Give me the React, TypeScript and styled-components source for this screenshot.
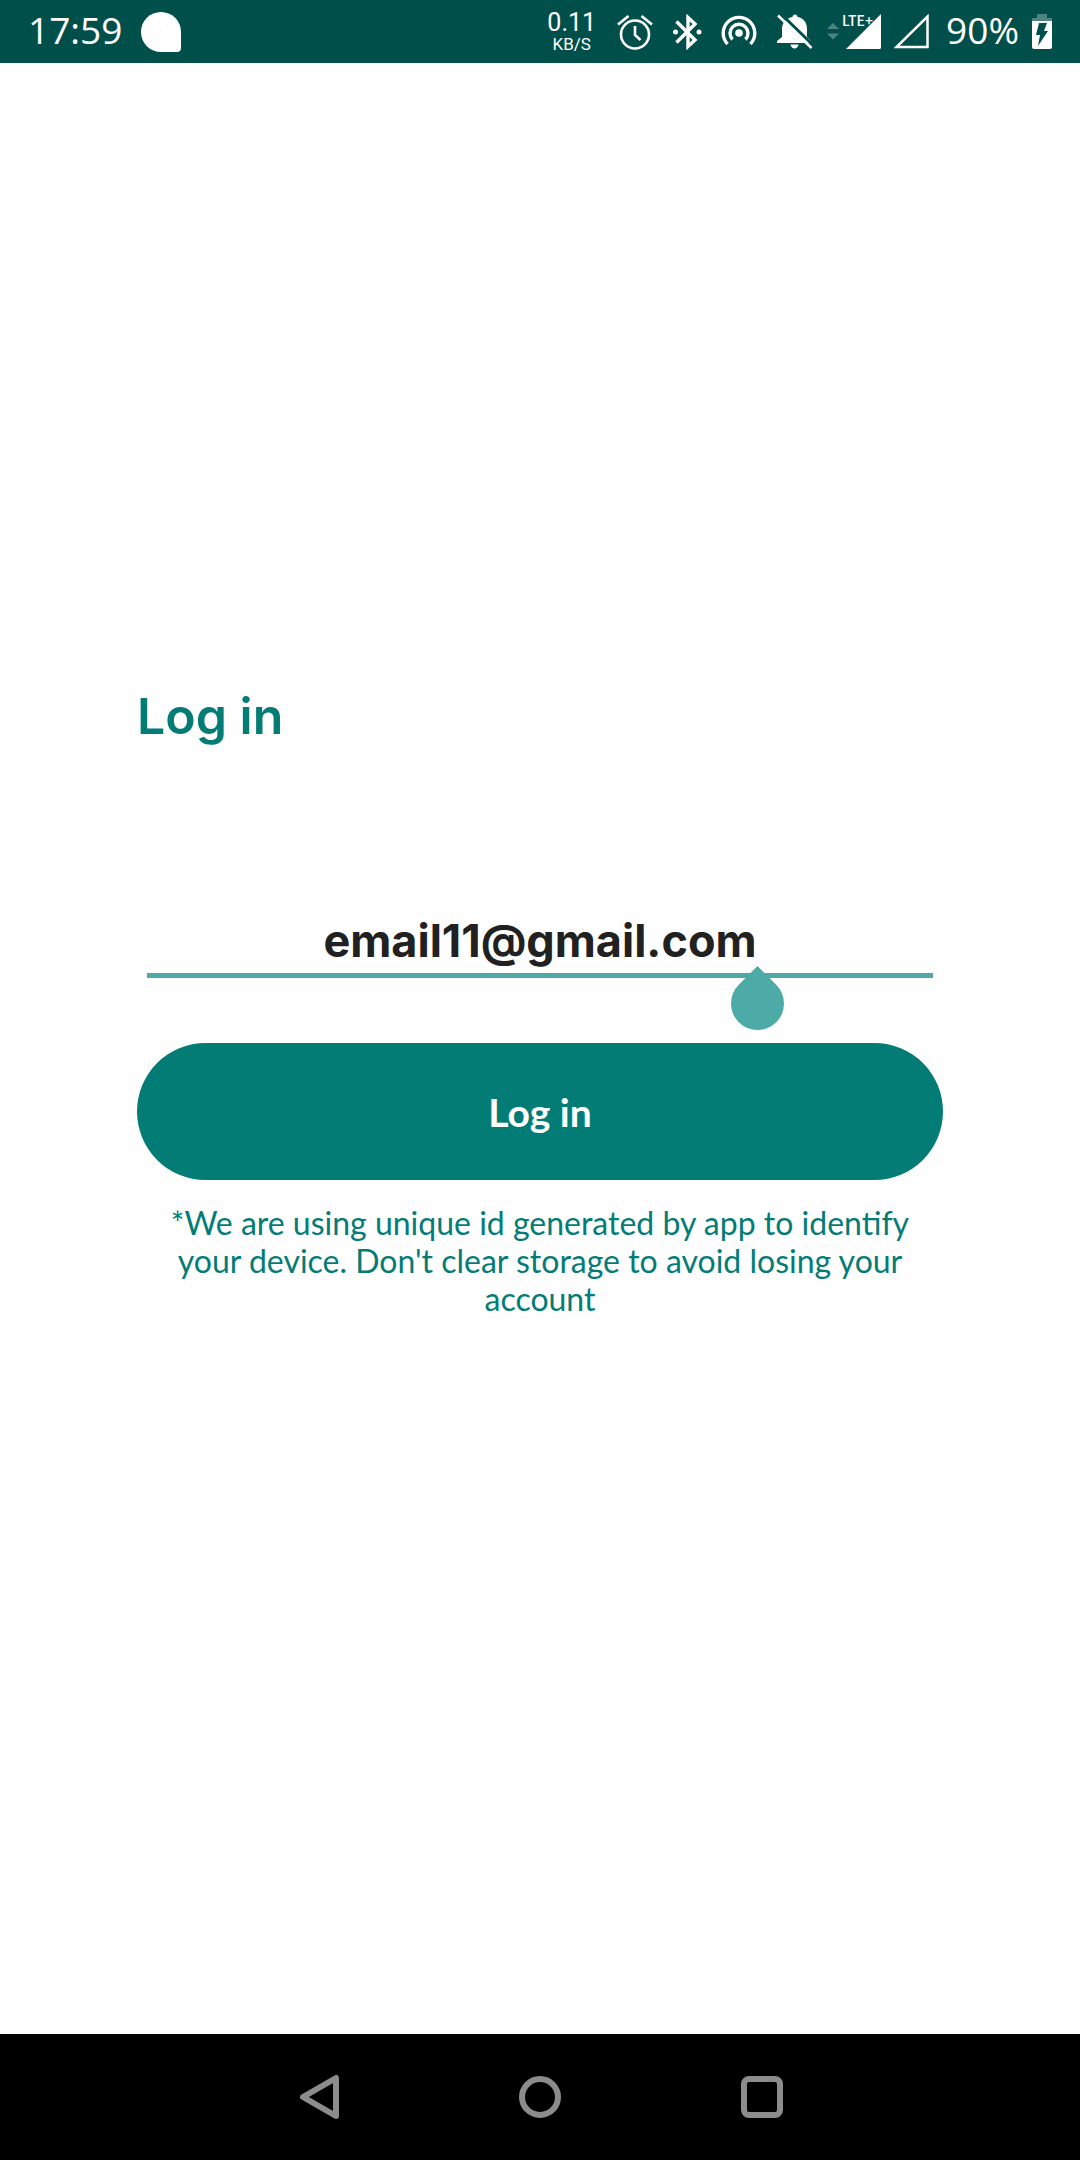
import React, { useState } from 'react';
import styled, { createGlobalStyle } from 'styled-components';

const GlobalStyle = createGlobalStyle`
  *, *::before, *::after { box-sizing: border-box; }
  body { margin: 0; background: #fefefe; font-family: "Open Sans", "Noto Sans", sans-serif; }
`;

const Screen = styled.div`
  display: flex;
  flex-direction: column;
  min-height: 100vh;
`;

const StatusBar = styled.header`
  display: flex;
  justify-content: space-between;
  align-items: center;
  height: 63px;
  padding: 0 28px;
  background: #004f4b;
  color: #fff;
`;

const StatusGroup = styled.div<{ $gap: number }>`
  display: flex;
  align-items: center;
  gap: ${(p) => p.$gap}px;
`;

const StatusText = styled.span`
  padding-bottom: 4px;
  font: 400 37px/50px "Open Sans", "Noto Sans", sans-serif;
`;

const Speed = styled.div`
  display: flex;
  flex-direction: column;
  align-items: center;
  padding-right: 2px;
  font-family: Roboto, sans-serif;
`;

const SpeedValue = styled.span`
  font-size: 25px;
  line-height: 24px;
`;

const SpeedUnit = styled.span`
  font-size: 17px;
  line-height: 18px;
`;

const Glyph = styled.svg`
  display: block;
  flex: none;
`;

const Signal = styled.div`
  position: relative;
`;

const NetworkType = styled.span`
  position: absolute;
  top: 0;
  left: 15px;
  font: 500 14px/12px "Noto Sans CJK SC", "Open Sans", sans-serif;
`;

const Main = styled.main`
  display: flex;
  flex: 1;
  flex-direction: column;
  justify-content: center;
  padding: 0 137px 92px;
`;

const Form = styled.form`
  display: flex;
  flex-direction: column;
`;

const Title = styled.h1`
  margin: 0 0 167px;
  color: #047c76;
  font: 600 50px/58px Inter, sans-serif;
`;

const Field = styled.div`
  position: relative;
  display: flex;
  margin: 0 10px 65px;
`;

const EmailInput = styled.input`
  width: 100%;
  height: 66px;
  padding: 0 0 5px;
  border: 0;
  border-bottom: 5px solid #4fa9a4;
  border-radius: 0;
  outline: 0;
  background: transparent;
  color: #212121;
  font: 700 45px/56px Inter, sans-serif;
  text-align: center;
`;

const CaretHandle = styled.span`
  position: absolute;
  top: 65px;
  left: 584px;
  width: 53px;
  height: 53px;
  border-radius: 0 50% 50% 50%;
  background: #4daba7;
  transform: rotate(45deg);
`;

const LoginButton = styled.button`
  height: 137px;
  border: 0;
  border-radius: 69px;
  background: #047c76;
  color: #fff;
  font: 700 39px/48px Lato, sans-serif;
`;

const Note = styled.p`
  margin: 24px 0 0;
  padding: 0 24px;
  color: #047c76;
  font: 400 32px/38px Lato, sans-serif;
  text-align: center;
`;

const NavBar = styled.nav`
  display: flex;
  justify-content: center;
  gap: 96px;
  height: 126px;
  background: #000;
`;

const NavButton = styled.button`
  display: flex;
  align-items: center;
  justify-content: center;
  width: 126px;
  padding: 0;
  border: 0;
  background: none;
  color: #8c8c8c;
`;

const NotificationIcon = () => (
  <Glyph width="40" height="40" viewBox="0 0 40 40" fill="#fff">
    <path d="M20 0a20 20 0 0 1 20 20v16a4 4 0 0 1-4 4H20a20 20 0 0 1 0-40z" />
  </Glyph>
);

const AlarmIcon = () => (
  <Glyph width="36" height="36" viewBox="0 0 36 36" fill="none" stroke="#fff" strokeWidth="2.6">
    <circle cx="18" cy="20.5" r="14" />
    <path d="M18 12v9l5.5 5M1 10.5 11.5 2M35 10.5 24.5 2" />
  </Glyph>
);

const BluetoothIcon = () => (
  <Glyph width="30" height="36" viewBox="0 0 30 36" fill="none" stroke="#fff" strokeWidth="3.4">
    <path d="M4.5 7.5 23 26l-7 6.5V3.5L23 10 4.5 28.5" />
    <circle cx="3.5" cy="18" r="2.5" fill="#fff" stroke="none" />
    <circle cx="27" cy="18" r="2.5" fill="#fff" stroke="none" />
  </Glyph>
);

const HotspotIcon = () => (
  <Glyph width="36" height="36" viewBox="0 0 36 36" fill="none" stroke="#fff" strokeWidth="3.4">
    <circle cx="18" cy="19" r="3.8" fill="#fff" stroke="none" />
    <path d="M6.5 30A15.8 15.8 0 1 1 29.5 30" />
    <path d="M11.5 25.5A9 9 0 1 1 24.5 25.5" />
  </Glyph>
);

const MutedBellIcon = () => (
  <Glyph width="38" height="36" viewBox="0 0 38 36">
    <path fill="#fff" d="M19 0.5c1.5 0 2.5 1 2.5 2.5C28 4 31 9 31 15v8l4 4v2H1v-2l5-4v-8C6 9 10 4 16.5 3c0-1.5 1-2.5 2.5-2.5zM14.5 30.5h8c0 2-2 4-4 4s-4-2-4-4z" />
    <path stroke="#004f4b" strokeWidth="3" d="M5 0 38 32" />
    <path stroke="#fff" strokeWidth="2.5" d="M2 1.5 35.5 34" />
  </Glyph>
);

const MobileDataIcon = () => (
  <Glyph width="54" height="36" viewBox="0 0 54 36">
    <path fill="#4d8481" d="M0 15 6 9l6 6zM0 19.5h12l-6 6z" />
    <path fill="#fff" d="M54 0v33.5a1.5 1.5 0 0 1-1.5 1.5H19z" />
  </Glyph>
);

const EmptySignalIcon = () => (
  <Glyph width="36" height="36" viewBox="0 0 36 36" fill="none" stroke="#fff" strokeWidth="2.5">
    <path d="M33.5 2.5v30.5H2.5z" />
  </Glyph>
);

const BatteryIcon = () => (
  <Glyph width="20" height="36" viewBox="0 0 20 36">
    <path fill="#4d8481" d="M5 0h10v4h5v4H0V4h5z" />
    <path fill="#fff" d="M0 7h20v26a2 2 0 0 1-2 2H2a2 2 0 0 1-2-2z" />
    <path fill="#004f4b" d="M7 9h8l-3 8h4L6 32l2-11H4z" />
  </Glyph>
);

export default function App() {
  const [email, setEmail] = useState('email11@gmail.com');

  return (
    <Screen>
      <GlobalStyle />
      <StatusBar>
        <StatusGroup $gap={19}>
          <StatusText>17:59</StatusText>
          <NotificationIcon />
        </StatusGroup>
        <StatusGroup $gap={16}>
          <StatusGroup $gap={19}>
            <Speed>
              <SpeedValue>0.11</SpeedValue>
              <SpeedUnit>KB/S</SpeedUnit>
            </Speed>
            <AlarmIcon />
            <BluetoothIcon />
            <HotspotIcon />
            <StatusGroup $gap={13}>
              <MutedBellIcon />
              <Signal>
                <MobileDataIcon />
                <NetworkType>LTE+</NetworkType>
              </Signal>
              <EmptySignalIcon />
            </StatusGroup>
          </StatusGroup>
          <StatusGroup $gap={13}>
            <StatusText>90%</StatusText>
            <BatteryIcon />
          </StatusGroup>
        </StatusGroup>
      </StatusBar>

      <Main>
        <Form onSubmit={(event) => event.preventDefault()}>
          <Title>Log in</Title>
          <Field>
            <EmailInput
              type="email"
              aria-label="Email"
              value={email}
              onChange={(event) => setEmail(event.target.value)}
            />
            <CaretHandle />
          </Field>
          <LoginButton type="submit">Log in</LoginButton>
          <Note>
            *We are using unique id generated by app to identify your device. Don't clear storage to
            avoid losing your account
          </Note>
        </Form>
      </Main>

      <NavBar>
        <NavButton type="button" aria-label="Back">
          <Glyph width="42" height="46" viewBox="0 0 42 46" fill="none" stroke="currentColor" strokeWidth="6" strokeLinejoin="round">
            <path d="M39 4v38L6 23z" />
          </Glyph>
        </NavButton>
        <NavButton type="button" aria-label="Home">
          <Glyph width="42" height="42" viewBox="0 0 42 42" fill="none" stroke="currentColor" strokeWidth="6">
            <circle cx="21" cy="21" r="18" />
          </Glyph>
        </NavButton>
        <NavButton type="button" aria-label="Recent apps">
          <Glyph width="42" height="42" viewBox="0 0 42 42" fill="none" stroke="currentColor" strokeWidth="6">
            <rect x="3" y="3" width="36" height="36" rx="5" />
          </Glyph>
        </NavButton>
      </NavBar>
    </Screen>
  );
}
